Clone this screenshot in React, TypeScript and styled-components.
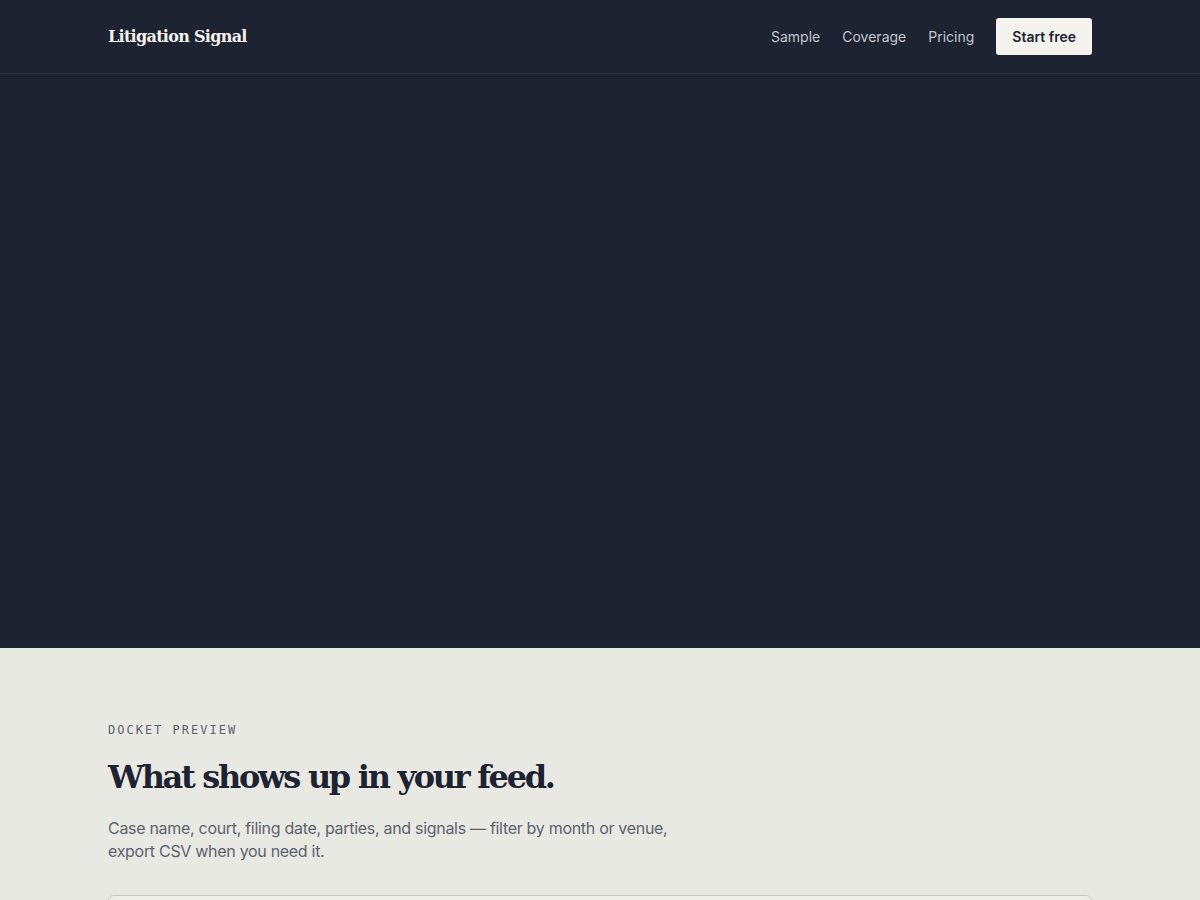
import styled, { createGlobalStyle } from "styled-components";

const GlobalStyle = createGlobalStyle`
  * { box-sizing: border-box; }
  html, body { margin: 0; padding: 0; }
  body {
    background: #e9e9e4;
    font-family: Inter, "Noto Sans", sans-serif;
    -webkit-font-smoothing: antialiased;
  }
`;

const navLinks = ["Sample", "Coverage", "Pricing"];

const App = () => {
  return (
    <>
      <GlobalStyle />
      <Header>
        <HeaderInner>
          <Logo>Litigation Signal</Logo>
          <Nav>
            {navLinks.map((link) => (
              <NavLink key={link} href="#">
                {link}
              </NavLink>
            ))}
            <StartButton>Start free</StartButton>
          </Nav>
        </HeaderInner>
      </Header>
      <Hero />
      <Preview>
        <Container>
          <Eyebrow>Docket preview</Eyebrow>
          <Title>What shows up in your feed.</Title>
          <Lede>
            Case name, court, filing date, parties, and signals — filter by
            month or venue, export CSV when you need it.
          </Lede>
          <DocketCard />
        </Container>
      </Preview>
    </>
  );
};
export default App;

// styles
const Header = styled.header`
  background: #1d2331;
  border-bottom: 1px solid #2e3443;
`;

const HeaderInner = styled.div`
  width: 984px;
  margin: 0 auto;
  height: 73px;
  display: flex;
  align-items: center;
  justify-content: space-between;
`;

const Logo = styled.div`
  font-family: "DejaVu Serif", "Liberation Serif", serif;
  font-weight: 700;
  font-size: 16px;
  letter-spacing: -0.7px;
  color: #f3f2ec;
  margin-top: -1px;
`;

const Nav = styled.nav`
  display: flex;
  align-items: center;
  gap: 22px;
`;

const NavLink = styled.a`
  font-size: 14px;
  color: #c3c7d0;
  text-decoration: none;
`;

const StartButton = styled.button`
  height: 37px;
  padding: 0 16px;
  border: 0;
  border-radius: 3px;
  background: #f3f2ec;
  color: #1d2331;
  font-family: Inter, sans-serif;
  font-weight: 600;
  font-size: 14px;
`;

const Hero = styled.section`
  background: #1d2331;
  height: 574px;
`;

const Preview = styled.section`
  background: #e9e9e4;
  padding-top: 75px;
  height: 252px;
  overflow: hidden;
`;

const Container = styled.div`
  width: 984px;
  margin: 0 auto;
`;

const Eyebrow = styled.div`
  font-family: "DejaVu Sans Mono", "Liberation Mono", monospace;
  font-size: 12px;
  letter-spacing: 2px;
  text-transform: uppercase;
  color: #5d626c;
`;

const Title = styled.h2`
  margin: 21px 0 0;
  font-family: "DejaVu Serif", "Liberation Serif", serif;
  font-weight: 700;
  font-size: 32px;
  letter-spacing: -2.3px;
  line-height: 1.2;
  color: #1d2331;
`;

const Lede = styled.p`
  margin: 21px 0 0;
  max-width: 580px;
  font-size: 16px;
  letter-spacing: -0.3px;
  line-height: 23px;
  color: #5d626c;
`;

const DocketCard = styled.div`
  margin-top: 32px;
  height: 120px;
  border: 1px solid #c9c9c2;
  border-radius: 6px;
  background: #efefea;
`;
